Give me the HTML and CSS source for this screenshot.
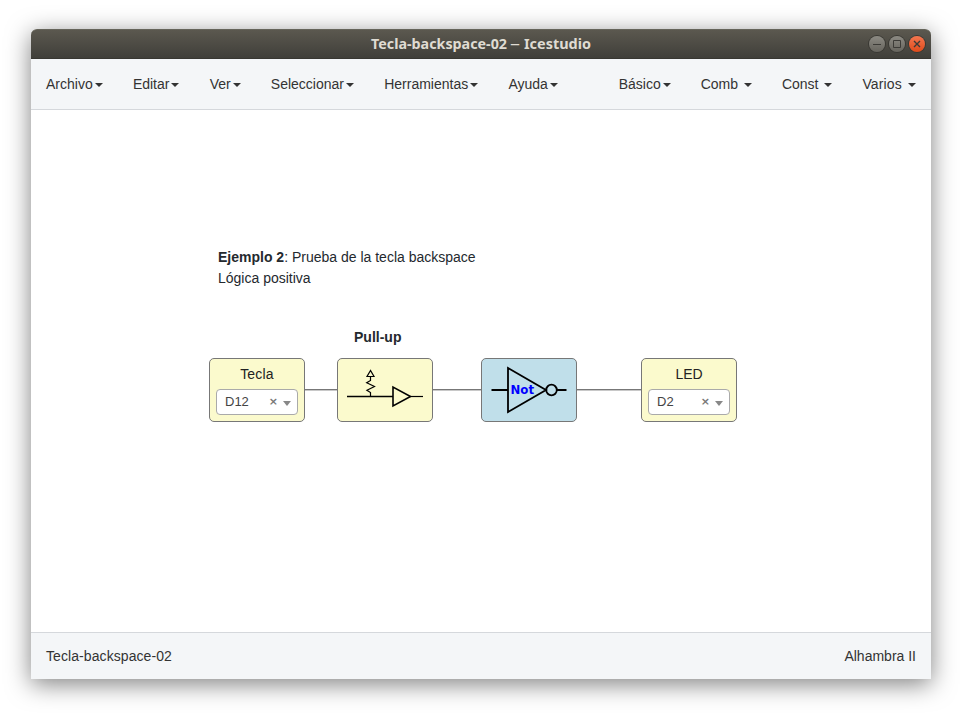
FILE: index.html
```html
<!DOCTYPE html>
<html lang="es">
<head>
<meta charset="utf-8">
<title>Tecla-backspace-02 – Icestudio</title>
<link rel="stylesheet" href="styles.css">
</head>
<body>
<div class="window">
  <header class="titlebar">
    <svg class="title" width="222" height="28"><text x="1" y="19" textLength="136" lengthAdjust="spacingAndGlyphs">Tecla-backspace-02</text><text class="dash" x="140" y="19" textLength="10" lengthAdjust="spacingAndGlyphs">–</text><text x="154" y="19" textLength="67" lengthAdjust="spacingAndGlyphs">Icestudio</text></svg>
    <div class="controls">
      <span class="control"><svg width="16" height="16"><path d="M4 8.5H12"/></svg></span>
      <span class="control"><svg width="16" height="16"><path d="M4.500 4.500H11.500V11.500H4.500Z"/></svg></span>
      <span class="control close"><svg width="16" height="16"><path d="M5 5L11 11M11 5L5 11"/></svg></span>
    </div>
  </header>
  <nav class="navbar">
    <ul class="menu main-menu">
      <li>Archivo<i class="caret"></i></li>
      <li>Editar<i class="caret"></i></li>
      <li>Ver<i class="caret"></i></li>
      <li>Seleccionar<i class="caret"></i></li>
      <li>Herramientas<i class="caret"></i></li>
      <li>Ayuda<i class="caret"></i></li>
    </ul>
    <ul class="menu">
      <li>Básico<i class="caret"></i></li>
      <li>Comb <i class="caret"></i></li>
      <li>Const <i class="caret"></i></li>
      <li class="last">Varios <i class="caret"></i></li>
    </ul>
  </nav>
  <main class="canvas">
    <div class="note intro"><b>Ejemplo 2</b>: Prueba de la tecla backspace<br>Lógica positiva</div>
    <div class="note pullup-label"><b>Pull-up</b></div>
    <div class="wire wire-a"></div>
    <div class="wire wire-b"></div>
    <div class="wire wire-c"></div>
    <div class="block io tecla">
      <span class="name">Tecla</span>
      <div class="select"><span class="value">D12</span><span class="clear">×</span><i class="arrow"></i></div>
    </div>
    <div class="block pullup">
      <svg width="94" height="62" fill="none" stroke="#000">
        <path d="M9 37.500H55" stroke-width="1.700"/>
        <path d="M72 37.500H85" stroke-width="1.200"/>
        <path d="M55 28V47L72.500 37.500Z" stroke-width="1.600"/>
        <path d="M32.500 11.500L29 17.500H36ZM32.500 17.500V21.500L28.700 23.700L36.500 27.500L28.900 31.300L32.500 33.500V37.500" stroke-width="1.200"/>
      </svg>
    </div>
    <div class="block not">
      <svg width="94" height="62" fill="none" stroke="#000" stroke-width="1.800">
        <path d="M9.500 31H26M75 31H84.500M26 9V53L64 31Z"/>
        <circle cx="69.500" cy="31" r="5.300"/>
        <text class="gate" x="28.500" y="35" textLength="23.500" lengthAdjust="spacingAndGlyphs">Not</text>
      </svg>
    </div>
    <div class="block io led">
      <span class="name">LED</span>
      <div class="select"><span class="value">D2</span><span class="clear">×</span><i class="arrow"></i></div>
    </div>
  </main>
  <footer class="footer"><span class="project">Tecla-backspace-02</span><span>Alhambra II</span></footer>
</div>
</body>
</html>
```
FILE: styles.css
```css
* { box-sizing: border-box; }
body {
  margin: 0;
  height: 716px;
  padding: 29px 38px 37px 31px;
  overflow: hidden;
  background: #fff;
  color: #333;
  font: 14px/20px "Liberation Sans", Arial, sans-serif;
}
.window {
  display: flex;
  flex-direction: column;
  width: 900px;
  height: 650px;
  border-radius: 6px 6px 0 0;
  background: #fff;
  box-shadow: 0 5px 24px rgba(0, 0, 0, .5);
}
.titlebar {
  display: flex;
  flex: 0 0 30px;
  align-items: center;
  justify-content: space-between;
  padding: 0 6px 0 339px;
  border-top: 1px solid #65645a;
  border-bottom: 1px solid #383732;
  border-radius: 6px 6px 0 0;
  background: linear-gradient(#5b584f, #403f3a);
}
.title text {
  fill: #dfdbd2;
  font: bold 13.5px "Noto Sans", sans-serif;
}
.title .dash { font-weight: normal; }
.controls { display: flex; gap: 4px; }
.control {
  width: 16px;
  height: 16px;
  border-radius: 50%;
  background: linear-gradient(#8c8a83, #66645d);
  box-shadow: 0 0 0 1px #3a3934;
}
.control svg { display: block; fill: none; stroke: #3c3b37; stroke-width: 1; }
.close { background: linear-gradient(#f4764f, #df4b1b); }
.close svg { stroke-width: 1.400; }
.navbar {
  display: flex;
  flex: 0 0 51px;
  justify-content: space-between;
  padding: 15px 15px 0;
  border-bottom: 1px solid #d5d8dc;
  background: #f4f6f8;
}
.menu {
  display: flex;
  gap: 30px;
  margin: 0;
  padding: 0;
  list-style: none;
  white-space: pre;
}
.main-menu { gap: 30.2px; }
.last { letter-spacing: .15px; }
.caret {
  display: inline-block;
  margin-left: 2px;
  border: 4px solid transparent;
  border-top-color: #333;
  border-bottom: 0;
  vertical-align: middle;
}
.canvas { position: relative; flex: 1; }
.note {
  position: absolute;
  color: #24292e;
  line-height: 21px;
  white-space: nowrap;
}
.intro { left: 187px; top: 137px; }
.pullup-label { left: 323px; top: 217px; }
.wire {
  position: absolute;
  top: 279px;
  height: 2px;
  border-top: 1px solid #777;
  background: #c8c8c8;
}
.wire-a { left: 274px; width: 32px; }
.wire-b { left: 402px; width: 48px; }
.wire-c { left: 546px; width: 64px; }
.block {
  position: absolute;
  top: 248px;
  width: 96px;
  height: 64px;
  border: 1px solid #777;
  border-radius: 5px;
  background: #fbfacd;
}
.block svg { display: block; }
.tecla { left: 178px; }
.pullup { left: 306px; }
.not { left: 450px; background: #c0dfea; }
.led { left: 610px; }
.gate {
  fill: #00f;
  stroke: none;
  font: bold 12px "DejaVu Sans", sans-serif;
}
.io {
  display: flex;
  flex-direction: column;
  align-items: center;
  padding-top: 5px;
  color: #222;
}
.tecla .name { letter-spacing: .2px; }
.select {
  display: flex;
  align-items: center;
  width: 82px;
  height: 26px;
  margin-top: 5px;
  padding: 0 6px 0 8px;
  border: 1px solid #aaa;
  border-radius: 4px;
  background: #fff;
  color: #444;
  font-size: 13px;
}
.value { flex: 1; }
.clear { color: #777; font: bold 11px/20px "DejaVu Sans", sans-serif; }
.arrow {
  margin: 3px 0 0 5px;
  border: 4px solid transparent;
  border-top: 5px solid #888;
  border-bottom: 0;
}
.footer {
  display: flex;
  flex: 0 0 47px;
  justify-content: space-between;
  padding: 13px 15px;
  border-top: 1px solid #d5d8dc;
  background: #f4f6f8;
}
.project { letter-spacing: .08px; }
```
